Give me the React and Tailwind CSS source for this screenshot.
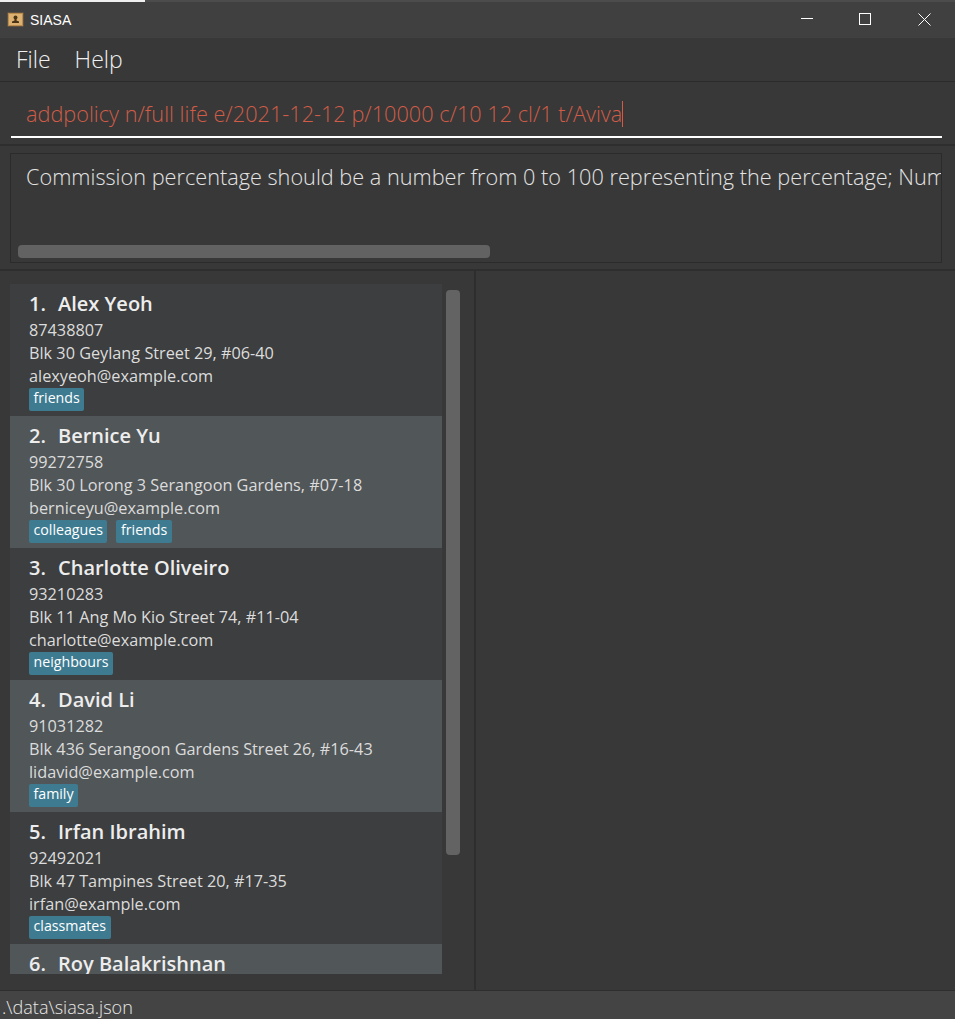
import React from 'react';

const persons = [
  { name: 'Alex Yeoh', phone: '87438807', address: 'Blk 30 Geylang Street 29, #06-40', email: 'alexyeoh@example.com', tags: ['friends'] },
  { name: 'Bernice Yu', phone: '99272758', address: 'Blk 30 Lorong 3 Serangoon Gardens, #07-18', email: 'berniceyu@example.com', tags: ['colleagues', 'friends'] },
  { name: 'Charlotte Oliveiro', phone: '93210283', address: 'Blk 11 Ang Mo Kio Street 74, #11-04', email: 'charlotte@example.com', tags: ['neighbours'] },
  { name: 'David Li', phone: '91031282', address: 'Blk 436 Serangoon Gardens Street 26, #16-43', email: 'lidavid@example.com', tags: ['family'] },
  { name: 'Irfan Ibrahim', phone: '92492021', address: 'Blk 47 Tampines Street 20, #17-35', email: 'irfan@example.com', tags: ['classmates'] },
  { name: 'Roy Balakrishnan', phone: '92624417', address: 'Blk 45 Aljunied Street 85, #11-31', email: 'royb@example.com', tags: ['colleagues'] },
];

const AppIcon = () => (
  <svg width="17" height="17" viewBox="0 0 17 17">
    <rect x="0.5" y="1.5" width="16" height="14" rx="1" fill="#b98d4e" stroke="#5e5140" />
    <rect x="2" y="3" width="13" height="11" fill="#dcb171" />
    <circle cx="8.5" cy="6.5" r="2" fill="#4a3418" />
    <path d="M7.500 8h2v1.500l2.500 1V12H5v-1.500l2.500-1z" fill="#4a3418" />
  </svg>
);

const PersonCard = ({ person, index }) => (
  <div className={`h-[132px] shrink-0 pl-[19px] pt-[6px] ${index % 2 === 0 ? 'bg-[#3c3e3f]' : 'bg-[#515658]'}`}>
    <div className="flex h-[28px] items-center text-[20px] font-semibold text-[#ededed]">
      <span className="w-[29px]">{index + 1}.</span>
      <span>{person.name}</span>
    </div>
    <div className="mt-[1px] h-[23px] text-[16.25px] leading-[23px] text-[#dcdcdc]">{person.phone}</div>
    <div className="h-[23px] text-[16.25px] leading-[23px] text-[#dcdcdc]">{person.address}</div>
    <div className="h-[23px] text-[16.25px] leading-[23px] text-[#dcdcdc]">{person.email}</div>
    <div className="flex gap-[9px]">
      {person.tags.map((tag) => (
        <span key={tag} className="h-[23px] rounded-[2px] bg-[#3e7b91] px-[4.5px] text-[14.2px] leading-[20px] text-white">{tag}</span>
      ))}
    </div>
  </div>
);

export default function App() {
  return (
    <div className="flex h-[1019px] w-[955px] flex-col overflow-hidden bg-[#383838] font-['Open_Sans',sans-serif]">
      {/* Title bar */}
      <div className="h-[2px] shrink-0 bg-[#4c4c4c]">
        <div className="h-full w-[145px] bg-[#f0f0f0]" />
      </div>
      <div className="flex h-[36px] shrink-0 items-center bg-[#404040] pb-[2px] pl-[7px] font-['Liberation_Sans',sans-serif] text-[14px] text-white">
        <AppIcon />
        <span className="ml-[6px] flex-1 pt-[2px]">SIASA</span>
        <svg width="12" height="12" viewBox="0 0 12 12" className="mr-[46px] text-white">
          <path d="M0 5.500h12" stroke="currentColor" fill="none" />
        </svg>
        <svg width="12" height="12" viewBox="0 0 12 12" className="mr-[47px] text-white">
          <rect x="0.500" y="0.500" width="11" height="11" stroke="currentColor" fill="none" />
        </svg>
        <svg width="13" height="13" viewBox="0 0 13 13" className="mr-[24px] text-white">
          <path d="M0.500 0.500l12 12M12.500 0.500l-12 12" stroke="currentColor" fill="none" />
        </svg>
      </div>

      {/* Menu bar */}
      <div className="flex h-[44px] shrink-0 items-center gap-[24px] border-b border-[#2b2b2b] pb-[1px] pl-[16px] text-[23px] font-light text-[#f0f0f0]">
        <span>File</span>
        <span>Help</span>
      </div>

      {/* Command box */}
      <div className="h-[64px] shrink-0 border-b-2 border-[#2e2e2e] pl-[11px] pr-[13px]">
        <div className="flex h-[56px] items-center border-b-2 border-white pl-[15px] pt-[10px] text-[21.7px] font-light text-[#d05c47]">
          <span>addpolicy n/full life e/2021-12-12 p/10000 c/10 12 cl/1 t/Aviva</span>
          <span className="h-[26px] w-px bg-[#d05c47]" />
        </div>
      </div>

      {/* Result display */}
      <div className="h-[125px] shrink-0 border-b-2 border-[#2e2e2e] px-[10px] pt-[7px] pr-[13px]">
        <div className="flex h-[110px] flex-col border border-[#2b2b2b] pl-[15px] pt-[7px]">
          <div className="h-[31px] overflow-hidden whitespace-nowrap text-[21.7px] font-light leading-[31px] text-[#e4e4e4]">
            Commission percentage should be a number from 0 to 100 representing the percentage; Number of payments
          </div>
          <div className="ml-[-8px] mt-[53px] h-[13px] w-[472px] rounded-[4px] bg-[#626262]" />
        </div>
      </div>

      {/* Lists */}
      <div className="flex min-h-0 flex-1">
        <div className="flex w-[476px] shrink-0 border-r-2 border-[#2e2e2e] pl-[10px] pt-[13px]">
          <div className="flex h-[690px] w-[432px] flex-col overflow-hidden">
            {persons.map((person, index) => (
              <PersonCard key={person.name} person={person} index={index} />
            ))}
          </div>
          <div className="ml-[4px] mt-[6px] h-[565px] w-[14px] rounded-[4px] bg-[#636363]" />
        </div>
      </div>

      {/* Status bar */}
      <div className="h-[29px] shrink-0 overflow-hidden border-t border-[#2e2e2e] bg-[#444444] pl-[2px] pt-[4px] text-[18.1px] font-light leading-[24px] text-[#e8e8e8]">
        .\data\siasa.json
      </div>
    </div>
  );
}
